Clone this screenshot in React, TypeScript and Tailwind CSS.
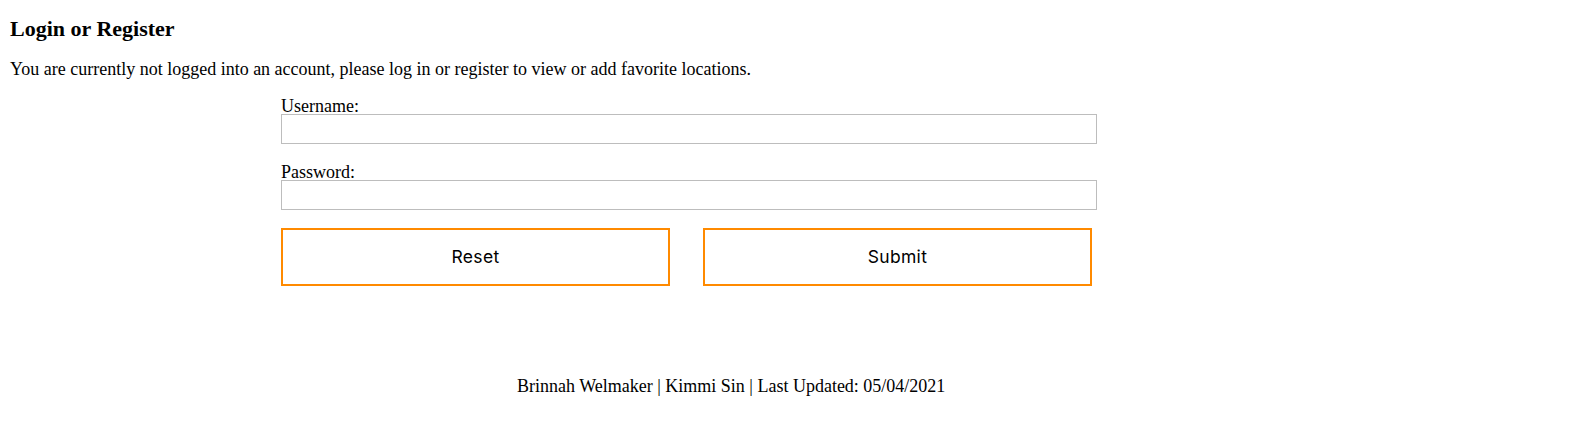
export default function App() {
  return (
    <div className="min-h-[424px] bg-white px-[10px] text-black font-['Liberation_Serif','Times_New_Roman',serif]">
      <h3 className="pt-[16px] text-[22px] font-bold leading-[26px]">Login or Register</h3>
      <p className="mt-[17px] text-[18px] leading-[20px]">
        You are currently not logged into an account, please log in or register to view or add favorite locations.
      </p>

      <form className="ml-[271px] mt-[19px] w-[816px]" onSubmit={(e) => e.preventDefault()}>
        <label className="block text-[18px] leading-[16px]">
          Username:
          <input type="text" className="block h-[30px] w-full border border-[#bdbdbd] bg-white" />
        </label>
        <label className="mt-[20px] block text-[18px] leading-[16px]">
          Password:
          <input type="password" className="block h-[30px] w-full border border-[#bdbdbd] bg-white" />
        </label>

        <div className="mt-[18px] flex gap-[33px]">
          <button
            type="reset"
            className="h-[58px] w-[389px] border-2 border-[#ff8a00] bg-white text-[17.5px] tracking-[0.3px] font-['Inter','Liberation_Sans',sans-serif]"
          >
            Reset
          </button>
          <button
            type="submit"
            className="h-[58px] w-[389px] border-2 border-[#ff8a00] bg-white text-[17.5px] tracking-[0.3px] font-['Inter','Liberation_Sans',sans-serif]"
          >
            Submit
          </button>
        </div>
      </form>

      <footer className="mt-[90px] pl-[507px] text-[18px] leading-[20px]">
        Brinnah Welmaker | Kimmi Sin | Last Updated: 05/04/2021
      </footer>
    </div>
  )
}
